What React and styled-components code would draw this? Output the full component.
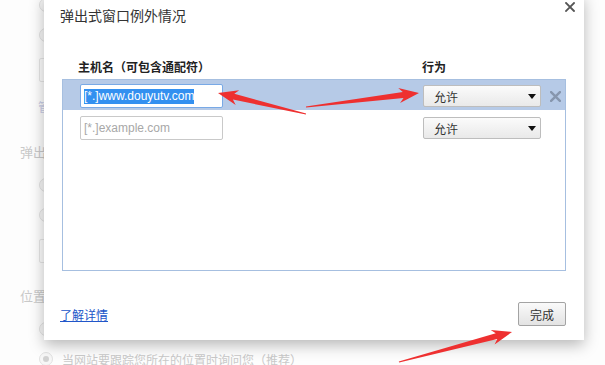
import React from "react";
import styled, { createGlobalStyle } from "styled-components";

const GlobalStyle = createGlobalStyle`
  html, body {
    margin: 0;
    padding: 0;
    width: 605px;
    height: 365px;
    overflow: hidden;
    background: #fff;
    font-family: "Noto Sans CJK SC", "Noto Sans", sans-serif;
  }
`;

const Screen = styled.div`
  position: relative;
  width: 605px;
  height: 365px;
  overflow: hidden;
  background: #fdfdfd;
`;

/* faded settings page behind the dialog */
const SettingsPage = styled.div`
  display: flex;
  flex-direction: column;
  padding: 0 0 0 20px;
  color: #c9c9c9;
  font-size: 12px;
`;

const SectionTitle = styled.div`
  height: 24px;
  line-height: 24px;
  font-size: 13px;
  margin-top: ${(p) => p.$mt || 0}px;
`;

const OptionRow = styled.div`
  display: flex;
  align-items: center;
  gap: 9px;
  height: 30px;
  padding-left: 19px;
  margin-top: ${(p) => p.$mt || 0}px;
`;

const Radio = styled.span`
  width: 12px;
  height: 12px;
  border-radius: 50%;
  border: 1px solid #e2e2e2;
  background: #f7f7f7;
  display: inline-flex;
  align-items: center;
  justify-content: center;
  &::after {
    content: "";
    width: 6px;
    height: 6px;
    border-radius: 50%;
    background: ${(p) => (p.$checked ? "#d2d2d2" : "transparent")};
  }
`;

const FadedBox = styled.div`
  margin: ${(p) => p.$mt || 0}px 0 0 19px;
  width: 200px;
  height: 22px;
  border: 1px solid #e6e6e6;
  border-radius: 2px;
`;

const FadedLink = styled.div`
  padding-left: 18px;
  margin-top: 12px;
  height: 26px;
  line-height: 26px;
  color: #c9cde6;
`;

/* the dialog */
const Dialog = styled.div`
  position: absolute;
  left: 44px;
  top: -6px;
  width: 540px;
  height: 346px;
  box-sizing: border-box;
  background: #fff;
  box-shadow: 0 5px 14px rgba(0, 0, 0, 0.28);
  display: flex;
  flex-direction: column;
`;

const TitleBar = styled.div`
  height: 42px;
  display: flex;
  align-items: center;
  justify-content: space-between;
  padding: 0 9px 0 16px;
`;

const Title = styled.h1`
  margin: 0;
  font-size: 14px;
  font-weight: 400;
  color: #333;
`;

const CloseButton = styled.button`
  align-self: flex-start;
  margin-top: 8px;
  padding: 0;
  border: 0;
  background: none;
  width: 10px;
  height: 10px;
  display: flex;
`;

const Body = styled.div`
  padding: 0 18px;
`;

const HeaderRow = styled.div`
  display: grid;
  grid-template-columns: 344px 1fr;
  padding-left: 16px;
  margin-top: 22px;
  height: 18px;
  line-height: 18px;
  font-size: 12px;
  font-weight: 700;
  color: #222;
`;

const List = styled.div`
  margin-top: 3px;
  height: 192px;
  box-sizing: border-box;
  border: 1px solid #a6bfe0;
`;

const Row = styled.div`
  display: grid;
  grid-template-columns: 343px 118px 1fr;
  align-items: center;
  padding: ${(p) => (p.$selected ? "4px 0 2px 17px" : "6px 0 6px 17px")};
  background: ${(p) => (p.$selected ? "#b6cae7" : "transparent")};
`;

const HostField = styled.div`
  width: 143px;
  height: 24px;
  box-sizing: border-box;
  border: 1px solid ${(p) => (p.$focused ? "#78a9e6" : "#c9c9c9")};
  border-radius: 2px;
  background: #fff;
  display: flex;
  align-items: center;
  padding-left: 3px;
  font-family: "Liberation Sans", "Noto Sans", sans-serif;
  font-size: 12px;
  color: ${(p) => (p.$placeholder ? "#a8a8a8" : "#222")};
  white-space: nowrap;
  overflow: hidden;
`;

const Selection = styled.span`
  background: #3390f0;
  color: #fff;
  line-height: 15px;
`;

const Select = styled.div`
  position: relative;
  height: 22px;
  box-sizing: border-box;
  border: 1px solid #bdbdbd;
  border-radius: 2px;
  background: linear-gradient(#fbfbfb, #e9e9e9);
  font-size: 12px;
  color: #333;
  display: flex;
  align-items: center;
  padding-left: 10px;
  &::after {
    content: "";
    position: absolute;
    right: 4px;
    top: 8px;
    border-left: 4.5px solid transparent;
    border-right: 4.5px solid transparent;
    border-top: 5px solid #111;
  }
`;

const DeleteButton = styled.button`
  justify-self: start;
  margin-left: 9px;
  padding: 0;
  border: 0;
  background: none;
  width: 11px;
  height: 11px;
  display: flex;
`;

const Footer = styled.div`
  display: flex;
  align-items: center;
  justify-content: space-between;
  margin-top: 31px;
  padding: 0 18px 0 16px;
`;

const LearnMore = styled.a`
  font-size: 12px;
  color: #2156c9;
  text-decoration: underline;
  cursor: pointer;
`;

const DoneButton = styled.button`
  width: 48px;
  height: 24px;
  padding: 0;
  border: 1px solid #a3a3a3;
  border-radius: 2px;
  background: linear-gradient(#fafafa, #e3e3e3);
  font-family: inherit;
  font-size: 12px;
  color: #333;
`;

const Annotations = styled.svg`
  position: absolute;
  left: 0;
  top: 0;
  pointer-events: none;
`;

const Cross = ({ color, width = 2 }) => (
  <svg width="100%" height="100%" viewBox="0 0 10 10">
    <path d="M1 1 L9 9 M9 1 L1 9" stroke={color} strokeWidth={width} strokeLinecap="square" />
  </svg>
);

// tapered annotation arrow: thin tail, wide shaft near the head, triangular head
const arrowPoints = ([tx, ty], [hx, hy], headLen = 20, headW = 15, shaftW = 6) => {
  const dx = hx - tx;
  const dy = hy - ty;
  const len = Math.hypot(dx, dy);
  const ux = dx / len;
  const uy = dy / len;
  const nx = -uy;
  const ny = ux;
  const bx = hx - ux * headLen;
  const by = hy - uy * headLen;
  const pts = [
    [tx + nx * 0.6, ty + ny * 0.6],
    [bx + nx * shaftW / 2 + ux * 4, by + ny * shaftW / 2 + uy * 4],
    [bx + nx * headW / 2, by + ny * headW / 2],
    [hx, hy],
    [bx - nx * headW / 2, by - ny * headW / 2],
    [bx - nx * shaftW / 2 + ux * 4, by - ny * shaftW / 2 + uy * 4],
    [tx - nx * 0.6, ty - ny * 0.6],
  ];
  return pts.map((p) => p.map((v) => v.toFixed(1)).join(",")).join(" ");
};

const arrows = [
  { tail: [306, 114], tip: [218, 93] },
  { tail: [306, 107], tip: [419, 93] },
  { tail: [399, 362], tip: [512, 332] },
];

const rules = [
  { host: "[*.]www.douyutv.com", action: "允许", selected: true },
  { host: "", action: "允许", selected: false },
];

const App = () => {
  return (
    <>
      <GlobalStyle />
      <Screen>
        <SettingsPage>
          <OptionRow $mt={-10}>
            <Radio />
          </OptionRow>
          <OptionRow>
            <Radio />
          </OptionRow>
          <FadedBox $mt={8} />
          <FadedLink>管理例外情况…</FadedLink>
          <SectionTitle $mt={20}>弹出式窗口</SectionTitle>
          <OptionRow $mt={6}>
            <Radio />
          </OptionRow>
          <OptionRow>
            <Radio />
          </OptionRow>
          <FadedBox $mt={9} />
          <SectionTitle $mt={21}>位置</SectionTitle>
          <OptionRow $mt={6}>
            <Radio />
          </OptionRow>
          <OptionRow>
            <Radio $checked />
            当网站要跟踪您所在的位置时询问您（推荐）
          </OptionRow>
        </SettingsPage>

        <Dialog>
          <TitleBar>
            <Title>弹出式窗口例外情况</Title>
            <CloseButton aria-label="关闭">
              <Cross color="#555" width={1.8} />
            </CloseButton>
          </TitleBar>
          <Body>
            <HeaderRow>
              <span>主机名（可包含通配符）</span>
              <span>行为</span>
            </HeaderRow>
            <List>
              {rules.map((r, i) => (
                <Row key={i} $selected={r.selected}>
                  {r.host ? (
                    <HostField $focused>
                      <Selection>{r.host}</Selection>
                    </HostField>
                  ) : (
                    <HostField $placeholder>[*.]example.com</HostField>
                  )}
                  <Select>{r.action}</Select>
                  {r.selected ? (
                    <DeleteButton aria-label="删除">
                      <Cross color="#8796ad" width={2.2} />
                    </DeleteButton>
                  ) : (
                    <span />
                  )}
                </Row>
              ))}
            </List>
          </Body>
          <Footer>
            <LearnMore>了解详情</LearnMore>
            <DoneButton>完成</DoneButton>
          </Footer>
        </Dialog>

        <Annotations width="605" height="365" viewBox="0 0 605 365">
          {arrows.map((a, i) => (
            <polygon key={i} points={arrowPoints(a.tail, a.tip)} fill="#ee3030" />
          ))}
        </Annotations>
      </Screen>
    </>
  );
};

export default App;
